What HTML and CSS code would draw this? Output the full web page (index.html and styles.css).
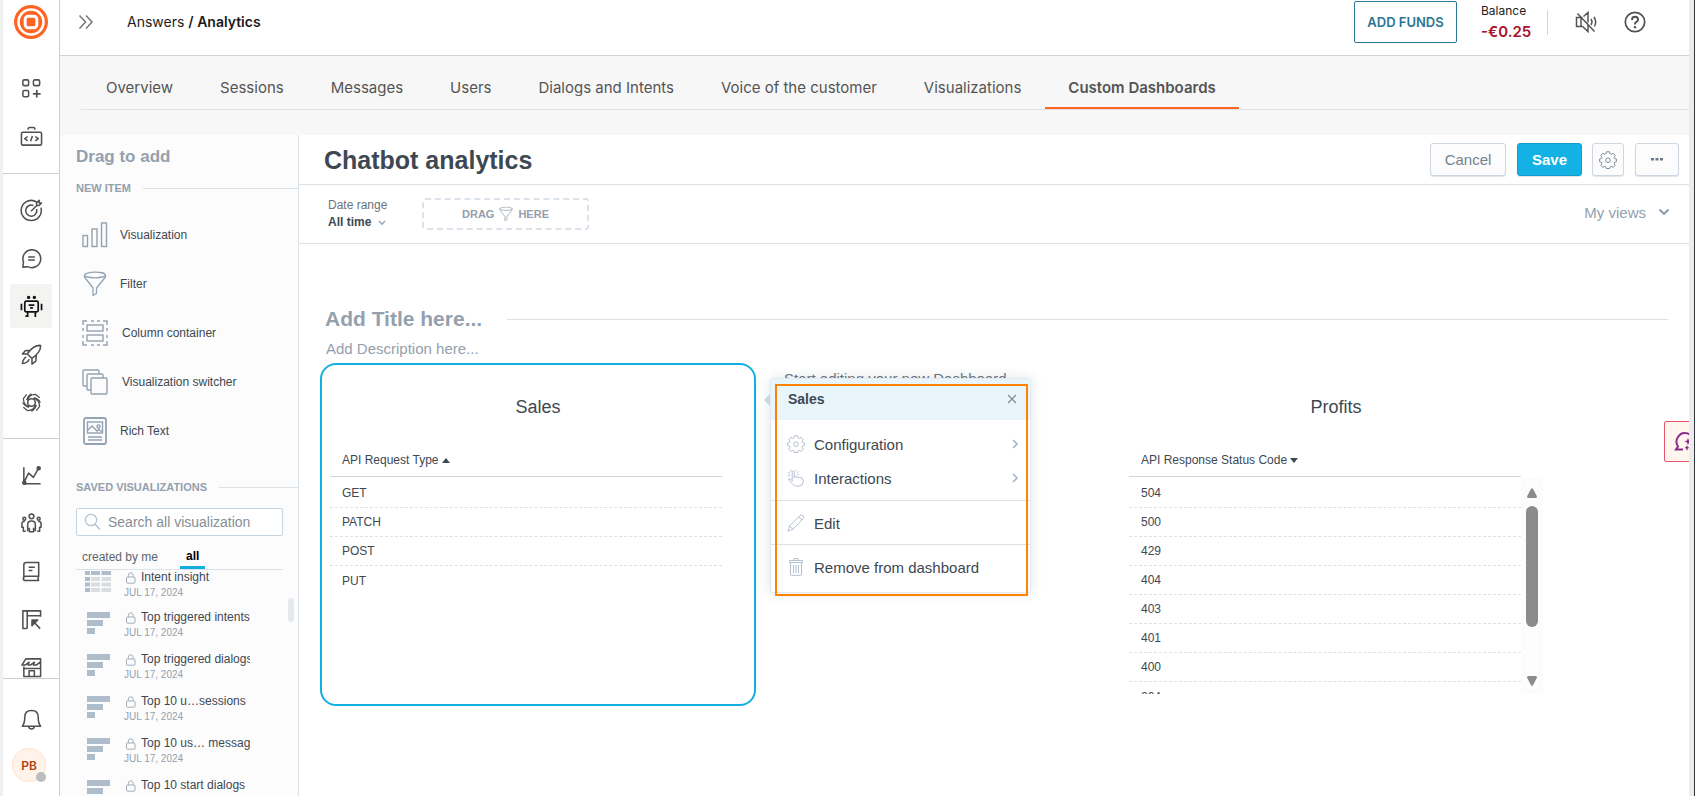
FILE: index.html
```html
<!DOCTYPE html>
<html lang="en">
<head>
<meta charset="utf-8">
<title>Answers / Analytics</title>
<link rel="stylesheet" href="styles.css">
</head>
<body>
<svg class="defs" aria-hidden="true">
  <symbol id="i-bars" viewBox="0 0 24 24"><g fill="#aebccb"><path d="M0 1h23v6H0zM0 9h16v6H0zM0 17h8v6H0z"/></g></symbol>
  <symbol id="i-lock" viewBox="0 0 10 12"><g fill="none" stroke="#a3aeba"><rect x=".5" y="5" width="8.5" height="6.2" rx="1"/><path d="M2.3 5V3.2a2.4 2.4 0 0 1 4.8 0V5"/></g></symbol>
  <symbol id="i-gear" viewBox="0 0 18 18"><g fill="none" stroke="currentColor" stroke-linejoin="round"><path d="M6.800 2.900 7.300.8h3.400l.5 2.100 1.100.5 1.900-1.100 2 2.400-1.200 1.700.4 1.100 2 .5v2.700l-2 .5-.4 1.200 1.200 1.800-2 2.200-1.900-1.100-1.100.5-.5 1.700H7.300l-.5-1.700-1.100-.5-1.900 1.100-2-2.200L3 12.400l-.4-1.200-2-.5V8l2-.5L3 6.400 1.800 4.700l2-2.400 1.900 1.100Z"/><circle cx="9" cy="9.200" r="2.300"/></g></symbol>
  <symbol id="i-funnel" viewBox="0 0 24 26"><g fill="none" stroke="#94a3b3" stroke-width="1.300" stroke-linejoin="round"><ellipse cx="12" cy="4" rx="10.500" ry="2.800"/><path d="M1.500 4v2L10 17v7.500l3.500-2V17L22.500 6V4"/></g></symbol>
</svg>
<div class="app">
  <nav class="rail" aria-label="Products">
    <a class="rail-logo" href="#" aria-label="Home">
      <svg width="34" height="34" viewBox="0 0 34 34"><circle cx="17" cy="17" r="17" fill="#ff6422"/><circle cx="17" cy="17" r="12.500" fill="none" stroke="#fff" stroke-width="2.600"/><rect x="11.200" y="11.200" width="11.600" height="11.600" rx="3" fill="none" stroke="#fff" stroke-width="3"/></svg>
    </a>
    <div class="rail-scroll">
      <div class="rail-group">
        <a class="rail-item" href="#" aria-label="Apps"><svg viewBox="0 0 24 24"><rect x="3" y="3" width="6" height="6" rx="1.500"/><rect x="14" y="3" width="6.500" height="6" rx="1.500"/><rect x="3" y="14" width="6" height="6.500" rx="1.500"/><path d="M17.500 13.500v8M13.500 17.500h8" stroke-width="1.800"/></svg></a>
        <a class="rail-item" href="#" aria-label="Developer tools"><svg viewBox="0 0 24 24"><rect x="1.500" y="7.500" width="21" height="13.500" rx="1.500"/><path d="M8.500 5V4Q8.500 2.500 10 2.500h4q1.500 0 1.500 1.500v1M8 12l-3 2.300 3 2.200M16 12l3 2.300-3 2.200M13 11.500l-2 5.500"/></svg></a>
      </div>
      <div class="rail-group">
        <a class="rail-item" href="#" aria-label="Goals"><svg viewBox="0 0 24 24"><path d="M17.500 3.200A10.500 10.500 0 1 0 21.800 9"/><path d="M14 6.800A5.800 5.800 0 1 0 17.300 10.500"/><path d="m11.500 12.800 6-6M17.300 6.800V4L20 1.300v2.800h2.500L19.800 6.800z"/></svg></a>
        <a class="rail-item" href="#" aria-label="Conversations"><svg viewBox="0 0 24 24"><path d="M3.600 15.500A9.300 9.300 0 1 1 8 20.500L3 21Z"/><path d="M8.500 10.500h7M8.500 13.500h7"/></svg></a>
        <a class="rail-item active" href="#" aria-label="Answers" aria-current="page"><svg viewBox="0 0 24 24"><rect x="5" y="6.500" width="14" height="11" rx="1.500"/><path d="M1.500 9v7M22.500 9v7M8 18v5M16 18v5M6.500 21v2M17.500 18v0M9 10.500h6M10.500 13.500h3"/><circle cx="9" cy="2.500" r=".9"/><circle cx="15" cy="2.500" r=".9"/></svg></a>
        <a class="rail-item" href="#" aria-label="Moments"><svg viewBox="0 0 24 24"><path d="M21.500 2.500Q14 2 7.500 11.500L12.500 16Q22 9.500 21.500 2.500ZM11 7.500 5.500 8 2.500 11.500h5M17 12.500l-.5 6.500-4 3v-6M6.500 14.500Q3 16.500 2.500 21.500q5.500-.5 7-4.500"/></svg></a>
        <a class="rail-item" href="#" aria-label="Integrations"><svg viewBox="0 0 24 24"><circle cx="12" cy="12" r="4"/><path d="M8 10Q9 3.500 16 3.500L20.500 7M14 8q6 .5 6.500 8L17 20.500M16 14q-1 6.500-8 6.500L3.500 17M10 16Q4 15.500 3.500 8L7 3.500M7 9.500Q8 5 12 2.800M14.500 7Q19 8 21.300 12M17 14.500Q16 19 12 21.300M9.500 17Q5 16 2.700 12" stroke-width="1.300"/></svg></a>
      </div>
      <div class="rail-group">
        <a class="rail-item" href="#" aria-label="Analyze"><svg viewBox="0 0 24 24"><path d="M4 3.500V20.500H21.500M4 19.500 9 9.500l5 4.500 5-9"/><circle cx="19.500" cy="4.500" r="1.600" fill="#50504f"/><circle cx="4.500" cy="19.500" r="1.600" fill="#50504f"/></svg></a>
        <a class="rail-item" href="#" aria-label="People"><svg viewBox="0 0 24 24"><circle cx="12" cy="4.500" r="2.500"/><path d="M8 20v-7q0-3.500 4-3.500t4 3.500v7M9.800 16.500v4h4.400v-4M6 20H3.500v-4H2v-3.500Q2 9.500 5 10M18 20h2.500v-4H22v-3.500Q22 9.500 19 10"/><circle cx="4.500" cy="7" r="1.500"/><circle cx="19.500" cy="7" r="1.500"/></svg></a>
        <a class="rail-item" href="#" aria-label="Catalog"><svg viewBox="0 0 24 24"><path d="M4 19V5q0-2.500 2.500-2.500h13V17H6q-2.500 0-2.500 2.200T6 21.500h13.500q-1.500-2 0-4.500M9 7.500h6.500M9 11h4"/></svg></a>
        <a class="rail-item" href="#" aria-label="Forms"><svg viewBox="0 0 24 24"><path d="M7.500 21.500H3V3h18.500v5H8M7.500 3v18.500M21.500 3v6M21 21.500l-7-7.500"/><path d="M12.500 12.500h6l-6 6z" fill="#50504f"/></svg></a>
        <a class="rail-item" href="#" aria-label="Exchange"><svg viewBox="0 0 24 24"><path d="M4 11v10.500h17.500V3H6L2 9.500h3.500l4-3-1 3h2.500l4-3-1 3H17l4-3M4 13h17M9.500 21v-5.500h5.500v5.500"/></svg></a>
      </div>
    </div>
    <div class="rail-foot">
      <a class="rail-item" href="#" aria-label="Notifications"><svg viewBox="0 0 24 24"><path d="M2.500 19Q5 16 5 9.500 5 2.500 12 2.500T19 9.500Q19 16 21.500 19ZM9 19.500q.5 2.500 3 2.500t3-2.500"/></svg></a>
      <button class="avatar" type="button">PB<span class="presence"></span></button>
    </div>
  </nav>

  <div class="page">
    <header class="topbar">
      <button class="plain expand" type="button" aria-label="Expand menu"><svg width="16" height="16" viewBox="0 0 16 16"><path d="m1.500 1.500 6 6.500-6 6.500M8 1.500 14 8l-6 6.500" fill="none" stroke="#777" stroke-width="1.500"/></svg></button>
      <div class="crumbs"><a href="#">Answers</a> <b>/ Analytics</b></div>
      <button class="add-funds" type="button">ADD FUNDS</button>
      <div class="balance"><span>Balance</span><strong>-€0.25</strong></div>
      <button class="plain" type="button" aria-label="Sound off"><svg width="24" height="24" viewBox="0 0 24 24"><path d="M8.500 7.500H2.500v9h6M7 8v8.500M8.500 16.500l5.500 5V14M9.500 6.500 14 2.500v10M3.500 3.500l17 18M17 9q2 3 0 6M20 7q3 5 .5 9.500" fill="none" stroke="#555" stroke-width="1.500"/></svg></button>
      <button class="plain help" type="button" aria-label="Help"><svg width="24" height="24" viewBox="0 0 24 24"><g fill="none" stroke="#505050" stroke-width="1.700"><circle cx="12" cy="12" r="9.700"/><path d="M9 10q0-3.200 3-3.200t3 2.700q0 1.500-1.500 2.300T12 14v.5" stroke-width="1.900"/></g><circle cx="12" cy="17.300" r="1.200" fill="#505050"/></svg></button>
    </header>

    <div class="tabs-area">
      <nav class="tabs" aria-label="Analytics">
        <a href="#">Overview</a><a href="#">Sessions</a><a href="#">Messages</a><a href="#">Users</a><a href="#">Dialogs and Intents</a><a href="#">Voice of the customer</a><a href="#">Visualizations</a><a class="current" href="#" aria-current="page">Custom Dashboards</a>
      </nav>
    </div>

    <div class="work">
      <aside class="library">
        <h2>Drag to add</h2>
        <h3 class="rule">NEW ITEM</h3>
        <ul class="new-items">
          <li><svg width="26" height="26" viewBox="0 0 26 26"><g fill="none" stroke="#94a3b3" stroke-width="1.400"><rect x="1" y="13.500" width="4.500" height="11"/><rect x="10" y="7" width="5" height="17.500"/><rect x="19.500" y="1" width="5" height="23.500"/></g></svg><span>Visualization</span></li>
          <li><svg width="24" height="26" viewBox="0 0 24 26"><use href="#i-funnel"/></svg><span>Filter</span></li>
          <li class="wide"><svg width="26" height="26" viewBox="0 0 26 26"><g fill="none" stroke="#94a3b3" stroke-width="1.400"><path d="M1 5V1h4M9 1h3M15 1h3M21 1h4v4M25 8v3M25 15v3M25 21v4h-4M18 25h-3M12 25H9M5 25H1v-4M1 18v-3M1 11V8"/><rect x="5" y="5" width="16" height="6"/><rect x="5" y="15" width="16" height="6"/></g></svg><span>Column container</span></li>
          <li class="wide"><svg width="26" height="26" viewBox="0 0 26 26"><g fill="#fcfcfc" stroke="#94a3b3" stroke-width="1.400"><rect x="1" y="1" width="16" height="16" rx="1"/><rect x="5" y="5" width="16" height="16" rx="1"/><rect x="9" y="9" width="16" height="16" rx="1"/></g></svg><span>Visualization switcher</span></li>
          <li><svg width="24" height="28" viewBox="0 0 24 28"><g fill="none" stroke="#94a3b3" stroke-width="1.400"><rect x="1" y="1" width="22" height="26" rx="2" stroke-width="1.800"/><rect x="4.500" y="5" width="15" height="11"/><path d="m5 13 4-4 5 5 2-1.500 3 2.500M5 20h14M5 23h14"/><circle cx="15.500" cy="9.500" r="1.500"/></g></svg><span>Rich Text</span></li>
        </ul>
        <h3 class="rule">SAVED VISUALIZATIONS</h3>
        <div class="search"><svg width="18" height="18" viewBox="0 0 18 18"><g fill="none" stroke="#b3c2cf" stroke-width="1.200"><circle cx="7" cy="7" r="5.700"/><path d="m11 11 5 5.500"/></g></svg><input type="text" aria-label="Search all visualizations" placeholder="Search all visualizations"></div>
        <div class="filters"><button type="button">created by me</button><button class="on" type="button">all</button></div>
        <div class="saved">
          <ul>
            <li><svg class="thumb" width="26" height="24" viewBox="0 0 26 24"><g fill="#aebccb"><path d="M0 1h5v4H0zM6 1h9v4H6zM16.500 1H26v4h-9.500zM0 7h5v4H0zM0 12.500h5v4H0zM0 18h5v4H0z"/></g><path fill="#d8dde1" d="M6 7h9v4H6zM16.500 7H26v4h-9.500zM6 12.500h9v4H6zM16.500 12.500H26v4h-9.500zM6 18h9v4H6zM16.500 18H26v4h-9.500z"/></svg><div><p><svg width="10" height="12"><use href="#i-lock"/></svg>Intent insight</p><time>JUL 17, 2024</time></div></li>
            <li><svg class="thumb" width="24" height="24"><use href="#i-bars"/></svg><div><p><svg width="10" height="12"><use href="#i-lock"/></svg>Top triggered intents</p><time>JUL 17, 2024</time></div></li>
            <li><svg class="thumb" width="24" height="24"><use href="#i-bars"/></svg><div><p><svg width="10" height="12"><use href="#i-lock"/></svg>Top triggered dialogs</p><time>JUL 17, 2024</time></div></li>
            <li><svg class="thumb" width="24" height="24"><use href="#i-bars"/></svg><div><p><svg width="10" height="12"><use href="#i-lock"/></svg>Top 10 u…sessions</p><time>JUL 17, 2024</time></div></li>
            <li><svg class="thumb" width="24" height="24"><use href="#i-bars"/></svg><div><p><svg width="10" height="12"><use href="#i-lock"/></svg>Top 10 us… messages</p><time>JUL 17, 2024</time></div></li>
            <li><svg class="thumb" width="24" height="24"><use href="#i-bars"/></svg><div><p><svg width="10" height="12"><use href="#i-lock"/></svg>Top 10 start dialogs</p></div></li>
          </ul>
          <span class="saved-thumb"></span>
        </div>
      </aside>

      <main class="board">
        <div class="board-head">
          <h1>Chatbot analytics</h1>
          <button class="btn cancel" type="button">Cancel</button>
          <button class="btn save" type="button">Save</button>
          <button class="btn cog" type="button" aria-label="Settings"><svg width="18" height="18"><use href="#i-gear"/></svg></button>
          <button class="btn more" type="button" aria-label="More"><svg width="12" height="3" viewBox="0 0 12 3"><path fill="#6b7885" d="M0 0h3v2.500H0zM4.500 0h3v2.500h-3zM9 0h3v2.500H9z"/></svg></button>
        </div>
        <div class="board-filters">
          <button class="plain date" type="button"><span>Date range</span><b>All time <svg width="8" height="6" viewBox="0 0 8 6"><path d="m1 1 3 3.300L7 1" fill="none" stroke="#94a3b3" stroke-width="1.300"/></svg></b></button>
          <div class="drop">DRAG <svg width="14" height="16" viewBox="0 0 24 26"><use href="#i-funnel"/></svg> HERE</div>
          <button class="plain views" type="button">My views<svg width="12" height="8" viewBox="0 0 12 8"><path d="m1.500 1.500 4.500 4.500 4.500-4.500" fill="none" stroke="#8796a5" stroke-width="1.900"/></svg></button>
        </div>

        <div class="canvas">
          <div class="title-row"><input class="title-input" type="text" aria-label="Title" placeholder="Add Title here..."></div>
          <input class="desc-input" type="text" aria-label="Description" placeholder="Add Description here...">
          <div class="cards">
            <section class="card selected">
              <h4>Sales</h4>
              <table>
                <thead><tr><th>API Request Type <svg width="8" height="5" viewBox="0 0 8 5"><path d="M0 5 4 0l4 5z" fill="#3e4852"/></svg></th></tr></thead>
                <tbody><tr><td>GET</td></tr><tr><td>PATCH</td></tr><tr><td>POST</td></tr><tr><td>PUT</td></tr></tbody>
              </table>
            </section>
            <div class="hint">
              <p>Start editing your new Dashboard</p>
              <div class="popup" role="dialog" aria-label="Sales">
                <header><b>Sales</b><button class="plain" type="button" aria-label="Close"><svg width="10" height="10" viewBox="0 0 10 10"><path d="m1 1 8 8M9 1 1 9" stroke="#7b8996" stroke-width="1.100"/></svg></button></header>
                <div class="menu">
                  <button type="button"><svg width="18" height="18"><use href="#i-gear"/></svg>Configuration<svg class="go" width="6" height="10" viewBox="0 0 6 10"><path d="m1 1 4 4-4 4"/></svg></button>
                  <button type="button"><svg width="18" height="18" viewBox="0 0 18 18"><path d="M1 3.500 3 4.500M3.500.8l.7 2M1 6.500h2M8.500.8 8 2.500M11.500 2.500 10 3.500M11.500 5.500H10M5.200 12.500V3.600q0-1.300 1-1.300t1 1.300v5q0-1.200 1.200-1.200t1.300 1.200q.2-1 1.300-.8t1.200 1.200q.2-.8 1.400-.6t1.200 1.300L14.500 9.500q1.700-.2 1.700 1.300v2.200q0 4-4 4h-2.500q-2.500 0-4-2L1.500 11q0-1.500 1.500-1.300l2.200 2" fill="none" stroke="currentColor" stroke-linejoin="round"/></svg>Interactions<svg class="go" width="6" height="10" viewBox="0 0 6 10"><path d="m1 1 4 4-4 4"/></svg></button>
                </div>
                <div class="menu single"><button type="button"><svg width="18" height="18" viewBox="0 0 18 18"><path d="M.8 17.200 2.500 12 13 1.500q1.500-1.300 3 .2t.2 3L6 15.300ZM2.500 12 6 15.300M11.800 2.800l3.300 3.300" fill="none" stroke="currentColor"/></svg>Edit</button></div>
                <div class="menu single last"><button type="button"><svg width="18" height="18" viewBox="0 0 18 18"><path d="M3.500 4.500v12q0 .8.800.8h9.400q.8 0 .8-.8v-12M2.500 2.500h13v2h-13zM7 2.500v-2h4v2M6.500 7v8M9 7v8M11.500 7v8" fill="none" stroke="currentColor"/></svg>Remove from dashboard</button></div>
                <span class="marker"></span>
              </div>
            </div>
            <section class="card profits">
              <h4>Profits</h4>
              <div class="scroller">
                <table>
                  <thead><tr><th>API Response Status Code <svg width="8" height="5" viewBox="0 0 8 5"><path d="M0 0h8L4 5z" fill="#3e4852"/></svg></th></tr></thead>
                  <tbody><tr><td>504</td></tr><tr><td>500</td></tr><tr><td>429</td></tr><tr><td>404</td></tr><tr><td>403</td></tr><tr><td>401</td></tr><tr><td>400</td></tr><tr><td>204</td></tr></tbody>
                </table>
                <div class="track"><svg width="10" height="10" viewBox="0 0 10 10"><path d="M4 .8q1-1.200 2 0l4 7.700q0 1.500-1 1.500H1Q0 10 0 8.500z" fill="#8b8b8b"/></svg><span></span><svg class="down" width="10" height="10" viewBox="0 0 10 10"><path d="M4 9.200q1 1.200 2 0l4-7.700Q10 0 9 0H1Q0 0 0 1.500z" fill="#8b8b8b"/></svg></div>
              </div>
            </section>
          </div>
        </div>
      </main>
    </div>
    <button class="assistant" type="button" aria-label="Assistant"><svg width="22" height="22" viewBox="0 0 22 22"><path d="M9 18.500H2l2-3A8.500 8.500 0 0 1 4 6Q7 1.500 11 2q5 .2 8 5" fill="none" stroke="#8a2a8a" stroke-width="2"/><path d="m14 7 1 2.500 2.500 1-2.500 1-1 2.500-1-2.500-2.500-1 2.500-1zM13 14l.8 2 1.700.8-1.700.8L13 20l-.8-2.400-1.700-.8 1.700-.8z" fill="#8a2a8a"/></svg></button>
  </div>
</div>
</body>
</html>
```

FILE: styles.css
```css
* { box-sizing: border-box; }
body {
  margin: 0;
  font-family: "Liberation Sans", Arial, sans-serif;
  font-size: 12px;
  color: #3e4852;
  background: #fff;
}
h1, h2, h3, h4, p, ul { margin: 0; padding: 0; }
ul { list-style: none; }
a { color: inherit; text-decoration: none; }
button, input { font: inherit; color: inherit; margin: 0; }
button { cursor: pointer; }
svg { display: block; flex: none; }
.defs { display: none; }
.plain { border: 0; background: none; padding: 0; }

.app {
  display: flex;
  height: 100vh;
  overflow: hidden;
  border-left: 3px solid #f0f0f0;
  border-right: 1px solid #33363b;
}

/* Product rail */
.rail {
  width: 57px;
  flex: none;
  display: flex;
  flex-direction: column;
  border-right: 1px solid #cfcfcf;
}
.rail-logo { flex: none; height: 64px; padding: 5px 0 0 11px; }
.rail-scroll { flex: 1; min-height: 0; overflow: hidden; }
.rail-group { padding-bottom: 12px; border-bottom: 1px solid #cfcfcf; }
.rail-group:first-child { padding-bottom: 13px; }
.rail-group + .rail-group { padding-top: 12px; }
.rail-group:last-child { border-bottom: 0; }
.rail-item {
  display: flex;
  align-items: center;
  justify-content: center;
  width: 42px;
  height: 44px;
  margin: 2px 7px;
  border-radius: 2px;
}
.rail-group .rail-item + .rail-item { margin-top: 4px; }
.rail-item svg {
  width: 23px;
  height: 23px;
  fill: none;
  stroke: #50504f;
  stroke-width: 1.6;
  stroke-linejoin: round;
}
.rail-item.active { background: #f3f3f2; }
.rail-item.active svg { stroke: #111; stroke-width: 1.8; }
.rail-foot { flex: none; height: 118px; border-top: 1px solid #cfcfcf; padding-top: 16px; }
.avatar {
  position: relative;
  display: block;
  width: 34px;
  height: 34px;
  margin: 7px 0 0 9px;
  padding: 0;
  border: 1px solid #ffe0cb;
  border-radius: 50%;
  background: #fff3ea;
  color: #b53f10;
  font: 600 12px Inter, sans-serif;
}
.presence {
  position: absolute;
  right: -1px;
  bottom: -1px;
  width: 10px;
  height: 10px;
  border-radius: 50%;
  background: #bdbdbd;
}

/* Page */
.page {
  position: relative;
  flex: 1;
  min-width: 0;
  display: flex;
  flex-direction: column;
  overflow: hidden;
  border-right: 5px solid #ececec;
}
.topbar {
  flex: none;
  height: 56px;
  display: flex;
  align-items: flex-start;
  padding: 1px 42px 0 18px;
  border-bottom: 1px solid #d3d3d3;
  font-family: Inter, sans-serif;
}
.topbar > .plain { height: 42px; display: flex; align-items: center; }
.crumbs { margin: 0 auto 0 33px; font-size: 14px; line-height: 42px; color: #1b1b1b; }
.crumbs b { font-weight: 600; }
.add-funds {
  width: 103px;
  height: 42px;
  padding: 0;
  border: 1px solid #2b7596;
  border-radius: 2px;
  background: #fff;
  color: #2b7596;
  font-size: 13px;
  font-weight: 600;
}
.balance {
  display: flex;
  flex-direction: column;
  margin: 0 26px 0 24px;
  width: 67px;
  position: relative;
  font-size: 12px;
  line-height: 20px;
  color: #222;
}
.balance::after { content: ""; position: absolute; right: 0; top: 9px; height: 25px; border-right: 1px solid #d3d3d3; }
.balance strong { font-size: 15px; font-weight: 600; line-height: 22px; color: #a8112b; }
.help { margin-left: 25px; }

.tabs-area { flex: none; height: 79px; padding-left: 21px; background: #f7f7f7; }
.tabs {
  display: flex;
  gap: 1px;
  height: 54px;
  padding-left: 2px;
  border-bottom: 1px solid #e0e3e4;
  font: 15px Inter, sans-serif;
  color: #545454;
}
.tabs a { flex: none; height: 53px; padding: 0 23px; line-height: 64px; overflow: hidden; }
.tabs .current { font-weight: 600; border-bottom: 2px solid #ff6422; }

.work { flex: 1; min-height: 0; display: flex; }

/* Library */
.library {
  width: 239px;
  flex: none;
  display: flex;
  flex-direction: column;
  padding: 11px 0 0 16px;
  background: #fcfcfc;
  border-right: 1px solid #dbe2ea;
}
.library h2 { font-size: 17px; line-height: 22px; color: #94a0ad; }
.rule { display: flex; align-items: center; gap: 12px; font-size: 11px; line-height: 20px; color: #94a0ad; }
h2 + .rule { margin-top: 10px; }
.rule::after { content: ""; flex: 1; border-top: 1px solid #dbe2ea; }
.new-items { padding: 12px 0 22px 6px; }
.new-items li { display: flex; align-items: center; gap: 12px; height: 49px; }
.new-items li svg { width: 26px; }
.new-items .wide { gap: 14px; }
.search {
  display: flex;
  align-items: center;
  flex: none;
  gap: 6px;
  height: 28px;
  width: 207px;
  margin-top: 11px;
  padding-left: 7px;
  border: 1px solid #c5d3df;
  border-radius: 2px;
  background: #fff;
}
.search input { width: 143px; border: 0; padding: 0; outline: 0; background: none; font-size: 14px; }
.search input::placeholder { color: #868e96; opacity: 1; }
.filters {
  display: flex;
  flex: none;
  gap: 16px;
  width: 207px;
  height: 34px;
  border-bottom: 1px solid #dbe2ea;
}
.filters button { border: 0; background: none; padding: 9px 6px 0; line-height: 16px; color: #5b6670; font-size: 12px; }
.filters .on { font-weight: 700; color: #000; border-bottom: 3px solid #12b0e0; }
.saved { position: relative; flex: 1; min-height: 0; overflow: hidden; }
.saved li { display: flex; gap: 13px; width: 174px; height: 42px; padding-left: 11px; overflow: hidden; }
.saved li:first-child { height: 40px; margin-top: -1px; padding-left: 9px; }
.saved li:first-child .thumb { margin-top: 1px; }
.saved li div { min-width: 0; }
.saved li p { display: flex; align-items: center; gap: 5px; padding-left: 2px; line-height: 17px; white-space: nowrap; }
.saved time { display: block; font-size: 10px; line-height: 14px; color: #94a0ad; }
.saved .thumb { margin-top: 2px; }
.saved-thumb { position: absolute; right: 4px; top: 28px; width: 6px; height: 24px; border-radius: 3px; background: #e5e9ee; }

/* Board */
.board { flex: 1; min-width: 0; display: flex; flex-direction: column; background: #fff; }
.board-head {
  flex: none;
  display: flex;
  align-items: center;
  height: 50px;
  padding: 0 10px 0 25px;
  border-bottom: 1px solid #dbe2ea;
}
.board-head h1 { flex: 1; font-size: 25px; line-height: 32px; }
.btn {
  display: flex;
  align-items: center;
  justify-content: center;
  height: 33px;
  padding: 0;
  border: 1px solid #ccd7e2;
  border-radius: 3px;
  background: #fcfcfc;
  box-shadow: 0 1px 1px #dfe6ec;
  font-size: 15px;
  color: #76828e;
}
.cancel { width: 76px; margin-right: 11px; }
.save { width: 65px; margin-right: 10px; background: #14b1e4; border-color: #109fce; color: #fff; font-weight: 700; }
.cog { width: 32px; margin-right: 11px; }
.more { width: 44px; }
.board-filters {
  flex: none;
  display: flex;
  align-items: center;
  height: 59px;
  padding: 0 19px 0 29px;
  border-bottom: 1px solid #dbe2ea;
}
.date { width: 94px; text-align: left; line-height: 17px; color: #6a747e; }
.date span { display: block; }
.date b { display: flex; align-items: center; gap: 7px; color: #3e4852; }
.drop {
  display: flex;
  align-items: center;
  justify-content: center;
  gap: 5px;
  width: 167px;
  height: 32px;
  border: 2px dashed #dbe2ea;
  border-radius: 3px;
  font-size: 11px;
  font-weight: 700;
  color: #94a0ad;
}
.views { display: flex; align-items: center; gap: 12px; margin-left: auto; padding-bottom: 4px; font-size: 15px; color: #94a0ad; }

.canvas { flex: 1; padding: 60px 135px 0 21px; }
.title-row { display: flex; align-items: center; height: 30px; padding-left: 5px; margin-right: -114px; }
.title-row::after { content: ""; flex: 1; border-top: 1px solid #dbe2ea; }
.title-input, .desc-input { border: 0; padding: 0; outline: 0; background: none; }
.title-input { width: 182px; font-size: 21px; font-weight: 700; }
.desc-input { display: block; width: 300px; height: 29px; margin-left: 6px; font-size: 15px; }
.title-input::placeholder, .desc-input::placeholder { color: #94a0ad; opacity: 1; }
.cards { display: grid; grid-template-columns: 436fr 362fr 436fr; }
.card { height: 343px; padding: 30px 32px 0 8px; border: 2px solid transparent; border-radius: 16px; }
.card.selected { border-color: #12b0e0; }
.card h4 { margin-bottom: 22px; font-size: 18px; font-weight: 400; line-height: 24px; text-align: center; }
.card.selected h4 { margin-right: -24px; }
.card table { width: 100%; border-spacing: 0; }
.card th { height: 36px; padding: 2px 12px 0; text-align: left; font-weight: 400; border-bottom: 1px solid #ccd6de; }
.card th svg { display: inline-block; vertical-align: 1px; }
.card td { height: 29px; padding: 0 12px; border-bottom: 1px dashed #dbe1e6; }
.card tr:first-child td { height: 31px; padding-top: 2px; }
.card tr:last-child td { border-bottom: 0; }
.card.profits { padding: 30px 9px 0; }
.scroller { display: flex; align-items: flex-start; height: 253px; overflow: hidden; }
.scroller table { flex: 1; }
.track { display: flex; flex-direction: column; align-items: center; width: 22px; height: 216px; margin-top: 37px; padding: 10px 0 8px; background: #fcfcfc; }
.track span { width: 12px; height: 121px; margin-top: 8px; border-radius: 6px; background: #8b8b8b; }
.down { margin-top: auto; }

.hint { position: relative; padding-left: 28px; }
.hint p { padding-top: 7px; font-size: 15px; line-height: 18px; color: #6a747e; white-space: nowrap; }
.popup {
  position: absolute;
  left: 14px;
  top: 15px;
  width: 261px;
  border: 1px solid #e3eaf0;
  border-radius: 3px;
  background: #fff;
  box-shadow: 0 0 12px rgba(70, 100, 130, .18);
  font-size: 15px;
}
.popup::before {
  content: "";
  position: absolute;
  left: -7px;
  top: 15px;
  border: 6px solid transparent;
  border-left: 0;
  border-right-color: #c2d9e8;
}
.popup header { display: flex; align-items: center; justify-content: space-between; height: 41px; padding: 0 13px 2px 17px; background: #e8f6fc; }
.popup header b { font-size: 14px; }
.menu { padding: 7px 0 5px; border-bottom: 1px solid #dbe2ea; }
.menu button {
  display: flex;
  align-items: center;
  gap: 9px;
  width: 100%;
  height: 34px;
  padding: 0 12px 0 16px;
  border: 0;
  background: none;
}
.menu button > svg:first-child { color: #b3c0d0; }
.cog svg { color: #7f8c99; }
.go { margin-left: auto; fill: none; stroke: #a7b7c6; stroke-width: 1.6; }
.menu.single { padding: 5px 0 4px; }
.menu.last { padding: 5px 0 8px; border-bottom: 0; }
.marker { position: absolute; left: 4px; top: 5px; width: 253px; height: 212px; border: 2px solid #ff8200; pointer-events: none; }

.assistant {
  position: absolute;
  right: -16px;
  top: 421px;
  width: 41px;
  height: 41px;
  padding: 0 0 0 9px;
  border: 1px solid #e5566d;
  border-radius: 2px;
  background: #fff6f0;
}
```
